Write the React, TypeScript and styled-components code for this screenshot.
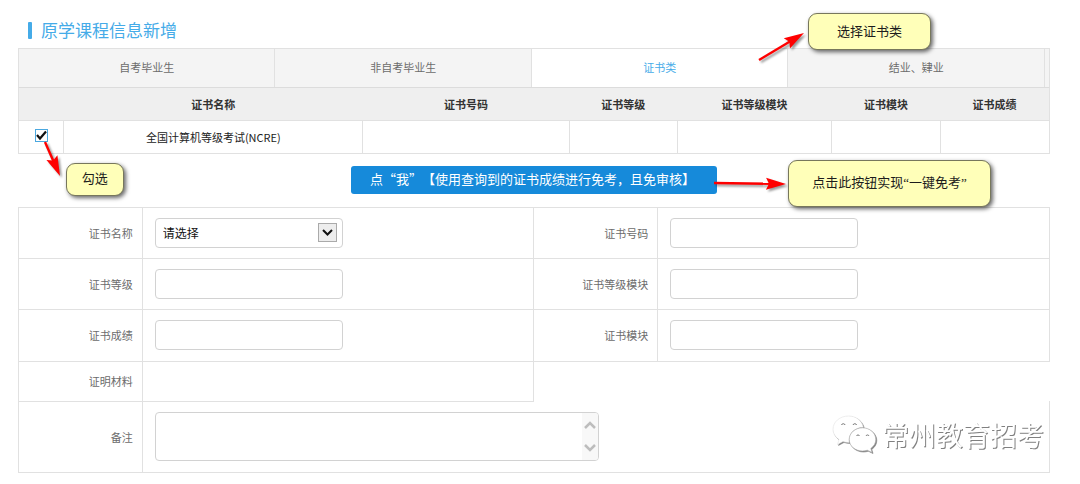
import React from "react";
import styled, { createGlobalStyle, css } from "styled-components";

const line = "#e1e1e1";

const GlobalStyle = createGlobalStyle`
  * { box-sizing: border-box; }
  body {
    margin: 0;
    background: #fff;
    color: #666;
    font: 11px/16px "Noto Sans CJK SC", "Noto Sans", sans-serif;
    text-spacing-trim: space-all;
  }
  button, input, select, textarea { font: inherit; margin: 0; }
`;

const Page = styled.main`
  padding: 12px 30px 12px 18px;
`;

const Title = styled.h1`
  display: flex;
  align-items: center;
  gap: 9px;
  height: 36px;
  margin: 0;
  padding-left: 10px;
  color: #45abe8;
  font-size: 17px;
  font-weight: 400;
  line-height: 24px;

  &::before {
    content: "";
    width: 4px;
    height: 17px;
    border-radius: 1px;
    background: #45abe8;
  }
`;

const TabBar = styled.div`
  position: relative;
  display: flex;
  height: 40px;
  border: 1px solid ${line};
  border-bottom-color: #dcdcdc;
  background: #f4f4f4;
`;

const Tab = styled.button<{ $active?: boolean }>`
  flex: 0 0 24.9%;
  padding: 0 0 2px;
  border: 0;
  border-right: 1px solid ${line};
  background: ${(p) => (p.$active ? "#fff" : "transparent")};
  color: ${(p) => (p.$active ? "#45abe8" : "#6c6c6c")};
  cursor: pointer;
`;

const tableBase = css`
  width: 100%;
  table-layout: fixed;
  border-collapse: collapse;
`;

const CertTable = styled.table`
  ${tableBase}

  thead tr { height: 32px; background: #efefef; }
  tbody tr { height: 33px; }
  th {
    padding: 0;
    border-bottom: 1px solid ${line};
    color: #333;
    font-weight: 700;
  }
  td {
    padding: 0;
    border: 1px solid ${line};
    color: #222;
    text-align: center;
  }
  thead tr th:first-child { border-left: 1px solid ${line}; }
  thead tr th:last-child { border-right: 1px solid ${line}; }
`;

const Col = styled.col<{ $w: string }>`
  width: ${(p) => p.$w};
`;

const CheckWrap = styled.label`
  position: relative;
  display: inline-grid;
  vertical-align: middle;
  margin-bottom: 4px;

  > * { grid-area: 1 / 1; }
`;

const CheckInput = styled.input`
  appearance: none;
  width: 13px;
  height: 13px;
  border: 1px solid #4aa8e0;
  background: #fff;

  &:not(:checked) + svg { visibility: hidden; }
`;

const CheckMark = styled.svg`
  width: 13px;
  height: 13px;
  pointer-events: none;
`;

const Action = styled.div`
  display: flex;
  justify-content: center;
  padding: 12px 0 13px;
`;

const ActionAnchor = styled.div`
  position: relative;
`;

const PrimaryButton = styled.button`
  display: block;
  height: 28px;
  padding: 0 22px 2px 19px;
  border: 0;
  border-radius: 3px;
  background: #168ada;
  color: #fff;
  font-size: 13px;
  line-height: 20px;
  white-space: nowrap;
  cursor: pointer;
`;

const Callout = styled.span<{ $left: string; $top: number; $w: number; $h: number }>`
  position: absolute;
  z-index: 2;
  left: ${(p) => p.$left};
  top: ${(p) => p.$top}px;
  display: flex;
  align-items: center;
  justify-content: center;
  width: ${(p) => p.$w}px;
  height: ${(p) => p.$h}px;
  border: 1px solid #77775c;
  border-radius: 9px;
  background: #ffffb9;
  box-shadow: 2px 2px 4px rgba(0, 0, 0, 0.6);
  color: #1c1c1c;
  font-family: "Liberation Serif", "Noto Sans CJK SC", serif;
  font-size: 13px;
  font-weight: 400;
  line-height: 20px;
  white-space: nowrap;
`;

const ArrowSvg = styled.svg<{ $left: string; $top: number }>`
  position: absolute;
  z-index: 2;
  left: ${(p) => p.$left};
  top: ${(p) => p.$top}px;
  overflow: visible;
  pointer-events: none;
  filter: drop-shadow(2px 2px 1px rgba(0, 0, 0, 0.4));
`;

type ArrowProps = { left: string; top: number; dx: number; dy: number };

/* A red pointer that starts at (left, top) and ends dx, dy away. */
function Arrow({ left, top, dx, dy }: ArrowProps) {
  const length = Math.hypot(dx, dy);
  const angle = (Math.atan2(dy, dx) * 180) / Math.PI;
  return (
    <ArrowSvg $left={left} $top={top} width="1" height="1" aria-hidden="true">
      <g transform={`rotate(${angle})`} fill="#fe0000">
        <path d={`M0 -1.2H${length - 14}V1.2H0Z`} />
        <path d={`M${length} 0L${length - 20} -6L${length - 17} 0L${length - 20} 6Z`} />
      </g>
    </ArrowSvg>
  );
}

const FormTable = styled.table`
  ${tableBase}

  th, td { border: 1px solid ${line}; }
  th {
    padding: 0 9px 0 0;
    color: #6c6c6c;
    font-weight: 400;
    text-align: right;
  }
  td { padding: 0 0 0 12px; }
`;

const FormRow = styled.tr<{ $h: number }>`
  height: ${(p) => p.$h}px;
`;

const NoteCell = styled.td`
  && { border-top: 0; }
`;

const control = css`
  display: block;
  border: 1px solid #d2d2d2;
  border-radius: 4px;
  background: #fff;
  color: #111;
  outline: 0;
`;

const TextField = styled.input`
  ${control}
  width: 188px;
  height: 30px;
  padding: 0 7px;
`;

const SelectWrap = styled.div`
  display: grid;
  align-items: center;
  width: 188px;

  > * { grid-area: 1 / 1; }
`;

const Select = styled.select`
  ${control}
  appearance: none;
  width: 100%;
  height: 30px;
  padding: 0 7px;
  font-size: 12px;
`;

const SelectArrow = styled.svg`
  justify-self: end;
  width: 19px;
  height: 19px;
  margin-right: 6px;
  pointer-events: none;
`;

const NoteBox = styled.div`
  display: grid;
  width: 444px;

  > * { grid-area: 1 / 1; }
`;

const NoteArea = styled.textarea`
  ${control}
  width: 100%;
  height: 49px;
  padding: 6px 24px 6px 7px;
  resize: none;
`;

const ScrollTrack = styled.span`
  display: flex;
  flex-direction: column;
  align-items: center;
  justify-content: space-between;
  justify-self: end;
  width: 16px;
  height: 47px;
  margin: 1px 1px 1px 0;
  padding: 8px 0;
  border-radius: 0 3px 3px 0;
  background: #f8f8f8;
`;

const NoteLayout = styled.div`
  display: flex;
  align-items: center;
  justify-content: space-between;
  padding-right: 5px;
`;

const Watermark = styled.div`
  display: flex;
  align-items: center;
  gap: 6px;
  padding-bottom: 4px;
  color: #fff;
  font-size: 27px;
  font-weight: 400;
  line-height: 36px;
  white-space: nowrap;
  filter: drop-shadow(1px 1px 0 #808080);
`;

const WeChatSvg = styled.svg`
  width: 44px;
  height: 37px;
  overflow: visible;
`;

function WeChatMark() {
  return (
    <WeChatSvg viewBox="-1 0 44 37" aria-hidden="true">
      <path
        fill="#fff"
        stroke="#dcdcdc"
        strokeWidth="0.5"
        d="M15.500 0C7 0 0 5.800 0 13.200C0 17.500 2.300 21 6 23.500L4.500 28.500L10 25.500C12 26.200 14 26.500 16 26.500C15.400 17 22 11.500 30.300 11.300C29 4.500 23 0 15.500 0Z"
      />
      <path
        fill="#fff"
        stroke="#a8a8a8"
        strokeWidth="0.6"
        d="M29.500 11.800C22.200 11.800 16.200 17 16.200 23.500C16.200 30 22.200 35 29.500 35C31.200 35 32.800 34.700 34.300 34.200L39 36.500L37.800 32.400C41 30.200 42.800 27 42.800 23.500C42.800 17 36.800 11.800 29.500 11.800Z"
      />
      <g fill="none" stroke="#777" strokeWidth="1">
        <path d="M8.500 9a1.900 1.900 0 0 1 3.600 0" />
        <path d="M20 9a1.900 1.900 0 0 1 3.600 0" />
        <path d="M23.500 20a1.600 1.600 0 0 1 3 0" />
        <path d="M33 20a1.600 1.600 0 0 1 3 0" />
      </g>
    </WeChatSvg>
  );
}

const tabs = ["自考毕业生", "非自考毕业生", "证书类", "结业、肄业"];
const certColumns = ["证书名称", "证书号码", "证书等级", "证书等级模块", "证书模块", "证书成绩"];
const certWidths = ["4.4%", "29%", "20%", "10.5%", "15%", "10.5%", "10.6%"];

export default function App() {
  return (
    <>
      <GlobalStyle />
      <Page>
        <Title>原学课程信息新增</Title>

        <TabBar role="tablist">
          {tabs.map((name) => (
            <Tab
              key={name}
              type="button"
              role="tab"
              aria-selected={name === "证书类"}
              $active={name === "证书类"}
            >
              {name}
            </Tab>
          ))}
          <Arrow left="71.8%" top={11} dx={45} dy={-27} />
          <Callout $left="76.6%" $top={-36} $w={123} $h={37}>选择证书类</Callout>
        </TabBar>

        <CertTable>
          <colgroup>
            {certWidths.map((w, i) => (
              <Col key={i} $w={w} />
            ))}
          </colgroup>
          <thead>
            <tr>
              <th aria-label="选择" />
              {certColumns.map((name) => (
                <th key={name} scope="col">{name}</th>
              ))}
            </tr>
          </thead>
          <tbody>
            <tr>
              <td>
                <CheckWrap>
                  <CheckInput type="checkbox" defaultChecked aria-label="勾选" />
                  <CheckMark viewBox="0 0 13 13" aria-hidden="true">
                    <path d="M2 6L5 9.500L11 2.500" fill="none" stroke="#111" strokeWidth="2.200" />
                  </CheckMark>
                  <Arrow left="10px" top={13} dx={15} dy={34} />
                  <Callout $left="31px" $top={34} $w={58} $h={33}>勾选</Callout>
                </CheckWrap>
              </td>
              <td>全国计算机等级考试(NCRE)</td>
              <td />
              <td />
              <td />
              <td />
              <td />
            </tr>
          </tbody>
        </CertTable>

        <Action>
          <ActionAnchor>
            <PrimaryButton type="button">点“我”【使用查询到的证书成绩进行免考，且免审核】</PrimaryButton>
            <Arrow left="calc(100% - 3px)" top={17} dx={72} dy={1} />
            <Callout $left="calc(100% + 71px)" $top={-6} $w={203} $h={47}>
              点击此按钮实现“一键免考”
            </Callout>
          </ActionAnchor>
        </Action>

        <FormTable>
          <colgroup>
            <Col $w="12%" />
            <Col $w="38%" />
            <Col $w="12%" />
            <Col $w="38%" />
          </colgroup>
          <tbody>
            <FormRow $h={51}>
              <th scope="row"><label htmlFor="cert-name">证书名称</label></th>
              <td>
                <SelectWrap>
                  <Select id="cert-name">
                    <option>请选择</option>
                  </Select>
                  <SelectArrow viewBox="0 0 19 19" aria-hidden="true">
                    <rect x="0.500" y="0.500" width="18" height="18" fill="#ededed" stroke="#aaa" />
                    <path d="M5 7L9.500 11.500L14 7" fill="none" stroke="#111" strokeWidth="2" />
                  </SelectArrow>
                </SelectWrap>
              </td>
              <th scope="row"><label htmlFor="cert-number">证书号码</label></th>
              <td><TextField id="cert-number" type="text" /></td>
            </FormRow>
            <FormRow $h={51}>
              <th scope="row"><label htmlFor="cert-level">证书等级</label></th>
              <td><TextField id="cert-level" type="text" /></td>
              <th scope="row"><label htmlFor="cert-level-module">证书等级模块</label></th>
              <td><TextField id="cert-level-module" type="text" /></td>
            </FormRow>
            <FormRow $h={52}>
              <th scope="row"><label htmlFor="cert-score">证书成绩</label></th>
              <td><TextField id="cert-score" type="text" /></td>
              <th scope="row"><label htmlFor="cert-module">证书模块</label></th>
              <td><TextField id="cert-module" type="text" /></td>
            </FormRow>
            <FormRow $h={40}>
              <th scope="row">证明材料</th>
              <td />
            </FormRow>
            <FormRow $h={71}>
              <th scope="row"><label htmlFor="note">备注</label></th>
              <NoteCell colSpan={3}>
                <NoteLayout>
                  <NoteBox>
                    <NoteArea id="note" />
                    <ScrollTrack aria-hidden="true">
                      <svg width="12" height="8" viewBox="0 0 12 8">
                        <path d="M1 7L6 2L11 7" fill="none" stroke="#bdbdbd" strokeWidth="2.500" />
                      </svg>
                      <svg width="12" height="8" viewBox="0 0 12 8">
                        <path d="M1 1L6 6L11 1" fill="none" stroke="#bdbdbd" strokeWidth="2.500" />
                      </svg>
                    </ScrollTrack>
                  </NoteBox>
                  <Watermark>
                    <WeChatMark />
                    常州教育招考
                  </Watermark>
                </NoteLayout>
              </NoteCell>
            </FormRow>
          </tbody>
        </FormTable>
      </Page>
    </>
  );
}
